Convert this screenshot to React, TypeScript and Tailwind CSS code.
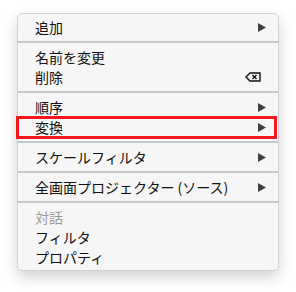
type Item =
  | { kind: "sep" }
  | { kind: "item"; label: string; arrow?: boolean; disabled?: boolean; del?: boolean; marked?: boolean };

const items: Item[] = [
  { kind: "item", label: "追加", arrow: true },
  { kind: "sep" },
  { kind: "item", label: "名前を変更" },
  { kind: "item", label: "削除", del: true },
  { kind: "sep" },
  { kind: "item", label: "順序", arrow: true },
  { kind: "item", label: "変換", arrow: true, marked: true },
  { kind: "sep" },
  { kind: "item", label: "スケールフィルタ", arrow: true },
  { kind: "sep" },
  { kind: "item", label: "全画面プロジェクター (ソース)", arrow: true },
  { kind: "sep" },
  { kind: "item", label: "対話", disabled: true },
  { kind: "item", label: "フィルタ" },
  { kind: "item", label: "プロパティ" },
];

const Arrow = () => (
  <svg width="8" height="9" viewBox="0 0 8 9" className="shrink-0">
    <polygon points="0,0 8,4.5 0,9" fill="#404040" />
  </svg>
);

const DeleteIcon = () => (
  <svg width="16" height="10" viewBox="0 0 16 10" className="shrink-0">
    <path
      d="M5 1 H15 V9 H5 L1 5 Z"
      fill="none"
      stroke="#111"
      strokeWidth="1.4"
      strokeLinejoin="miter"
    />
    <path d="M7.5 3 L11.5 7 M11.5 3 L7.5 7" stroke="#111" strokeWidth="1.4" />
  </svg>
);

export default function App() {
  return (
    <div
      className="w-[296px] h-[292px] bg-white pt-[13px] pl-[17px]"
      style={{ fontFamily: '"Noto Sans CJK JP", "Noto Sans", sans-serif' }}
    >
      <div className="w-[262px] rounded-[5px] bg-[#f6f6f6] border border-[#d2d2d2] py-[3px] shadow-[0_6px_14px_rgba(0,0,0,0.18)]">
        {items.map((it, i) =>
          it.kind === "sep" ? (
            <div key={i} className="py-[4px]">
              <div className="h-[2px] bg-[#c8c8c8]" />
            </div>
          ) : (
            <div
              key={i}
              className={
                "relative flex items-center justify-between h-[20px] pl-[17px] pr-[12px] text-[14px] leading-[20px] " +
                (it.disabled ? "text-[#9a9a9a]" : "text-[#111]")
              }
            >
              <span>{it.label}</span>
              {it.arrow && <Arrow />}
              {it.del && (
                <span className="pr-[5px] flex items-center">
                  <DeleteIcon />
                </span>
              )}
              {it.marked && (
                <div className="absolute left-[-2px] right-[1px] top-[-1px] bottom-[-2px] border-[3px] border-[#f3171b]" />
              )}
            </div>
          )
        )}
      </div>
    </div>
  );
}
